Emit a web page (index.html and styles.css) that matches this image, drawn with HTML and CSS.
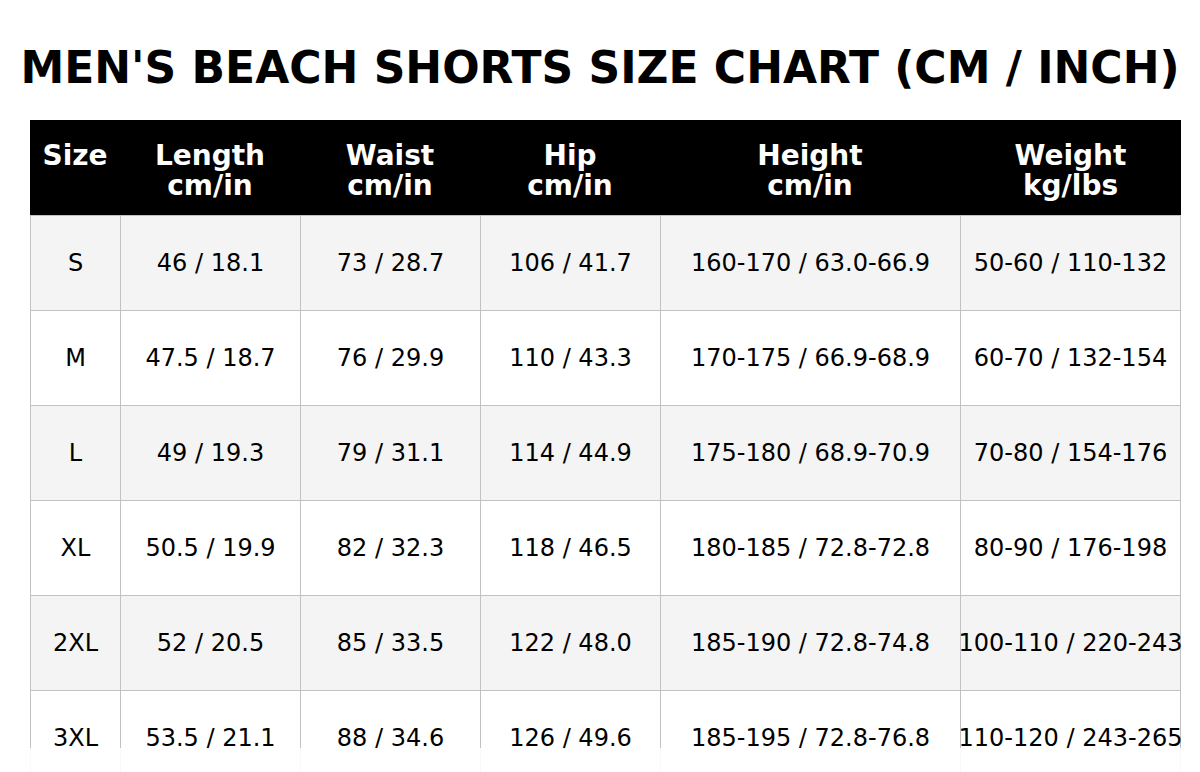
FILE: index.html
```html
<!DOCTYPE html>
<html lang="en">
<head>
<meta charset="utf-8">
<title>Men's Beach Shorts Size Chart</title>
<link rel="stylesheet" href="styles.css">
</head>
<body>
<h1 class="title">MEN'S BEACH SHORTS SIZE CHART (CM / INCH)</h1>
<div class="chart">
  <div class="hcell"><span>Size</span></div>
  <div class="hcell"><span>Length</span><span>cm/in</span></div>
  <div class="hcell"><span>Waist</span><span>cm/in</span></div>
  <div class="hcell"><span>Hip</span><span>cm/in</span></div>
  <div class="hcell"><span>Height</span><span>cm/in</span></div>
  <div class="hcell"><span>Weight</span><span>kg/lbs</span></div>

  <div class="cell shade">S</div>
  <div class="cell shade">46 / 18.1</div>
  <div class="cell shade">73 / 28.7</div>
  <div class="cell shade">106 / 41.7</div>
  <div class="cell shade">160-170 / 63.0-66.9</div>
  <div class="cell last shade">50-60 / 110-132</div>

  <div class="cell">M</div>
  <div class="cell">47.5 / 18.7</div>
  <div class="cell">76 / 29.9</div>
  <div class="cell">110 / 43.3</div>
  <div class="cell">170-175 / 66.9-68.9</div>
  <div class="cell last">60-70 / 132-154</div>

  <div class="cell shade">L</div>
  <div class="cell shade">49 / 19.3</div>
  <div class="cell shade">79 / 31.1</div>
  <div class="cell shade">114 / 44.9</div>
  <div class="cell shade">175-180 / 68.9-70.9</div>
  <div class="cell last shade">70-80 / 154-176</div>

  <div class="cell">XL</div>
  <div class="cell">50.5 / 19.9</div>
  <div class="cell">82 / 32.3</div>
  <div class="cell">118 / 46.5</div>
  <div class="cell">180-185 / 72.8-72.8</div>
  <div class="cell last">80-90 / 176-198</div>

  <div class="cell shade">2XL</div>
  <div class="cell shade">52 / 20.5</div>
  <div class="cell shade">85 / 33.5</div>
  <div class="cell shade">122 / 48.0</div>
  <div class="cell shade">185-190 / 72.8-74.8</div>
  <div class="cell last shade">100-110 / 220-243</div>

  <div class="cell">3XL</div>
  <div class="cell">53.5 / 21.1</div>
  <div class="cell">88 / 34.6</div>
  <div class="cell">126 / 49.6</div>
  <div class="cell">185-195 / 72.8-76.8</div>
  <div class="cell last">110-120 / 243-265</div>
</div>
<div class="fade"></div>
</body>
</html>
```

FILE: styles.css
```css
html, body {
  margin: 0;
  padding: 0;
  background: #ffffff;
}

body {
  font-family: "DejaVu Sans", "Liberation Sans", sans-serif;
  color: #000;
  overflow: hidden;
  height: 772px;
}

.title {
  margin: 42px 0 27px;
  font-size: 44px;
  font-weight: bold;
  line-height: 51px;
  text-align: center;
  white-space: nowrap;
  color: #000;
}

.chart {
  margin-left: 30px;
  display: grid;
  grid-template-columns: 90px 180px 180px 180px 300px 221px;
  grid-auto-rows: 95px;
  width: 1151px;
}

.hcell {
  background: #000;
  color: #fff;
  font-weight: bold;
  font-size: 28px;
  line-height: 30px;
  display: flex;
  flex-direction: column;
  align-items: center;
  padding-top: 21px;
  box-sizing: border-box;
  white-space: nowrap;
}

.cell {
  box-sizing: border-box;
  border-top: 1px solid #c2c2c2;
  border-left: 1px solid #c2c2c2;
  display: flex;
  align-items: center;
  justify-content: center;
  font-size: 24px;
  white-space: nowrap;
  background: #fff;
  color: #000;
}

.cell.last {
  border-right: 1px solid #c2c2c2;
}

.cell.shade {
  background: #f4f4f4;
}

.fade {
  position: fixed;
  left: 0;
  right: 0;
  bottom: 0;
  height: 24px;
  background: rgba(255, 255, 255, 0.9);
}
```
